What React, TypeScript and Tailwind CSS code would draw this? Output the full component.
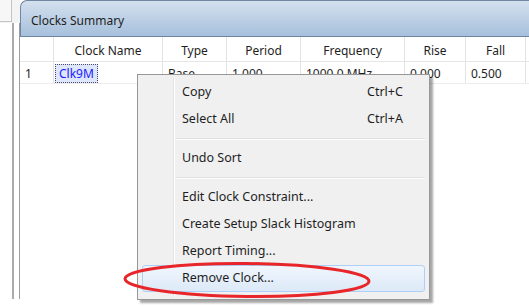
import React from "react";

const cols = [
  { label: "", w: "w-[34px]" },
  { label: "Clock Name", w: "w-[109px]" },
  { label: "Type", w: "w-[64px]" },
  { label: "Period", w: "w-[74px]" },
  { label: "Frequency", w: "w-[104px]" },
  { label: "Rise", w: "w-[61px]" },
  { label: "Fall", w: "w-[60px]" },
];

const row = ["1", "Clk9M", "Base", "1.000", "1000.0 MHz", "0.000", "0.500"];

type Item = { label?: string; key?: string; sep?: boolean; hot?: boolean };

const menu: Item[] = [
  { label: "Copy", key: "Ctrl+C" },
  { label: "Select All", key: "Ctrl+A" },
  { sep: true },
  { label: "Undo Sort" },
  { sep: true },
  { label: "Edit Clock Constraint..." },
  { label: "Create Setup Slack Histogram" },
  { label: "Report Timing..." },
  { label: "Remove Clock...", hot: true },
];

const App = () => {
  return (
    <div className="relative w-[529px] h-[307px] bg-white overflow-hidden text-[12px] text-[#1e1e1e] font-['Noto_Sans',sans-serif]">
      <div className="flex h-[299px]">
        {/* left dock strip */}
        <div className="w-[20px] flex flex-col">
          <div className="h-[23px] bg-[#f3f3f3] flex">
            <div className="w-[12px] h-[22px] bg-[#f7f7f7] border-r border-b border-[#c4c4c4]" />
          </div>
          <div className="flex-1 flex">
            <div className="w-[14px] border-r-2 border-[#a9abad]" />
            <div className="flex-1 border-r border-[#9a9c9f]" />
          </div>
        </div>

        {/* clocks summary panel */}
        <div className="flex-1 flex flex-col">
          <div className="h-[37px] rounded-tl-[7px] border-l border-t border-b border-[#6f86a3] bg-gradient-to-b from-[#d3e0ee] to-[#a7c0dc] flex items-center pl-[10px] pt-[4px]">
            Clocks Summary
          </div>
          <div className="flex h-[25px] border-b border-[#e6e6e6] bg-white">
            {cols.map((c, i) => (
              <div key={i} className={`${c.w} border-r border-[#e3e3e3] flex items-center justify-center pt-[3px]`}>
                {c.label}
              </div>
            ))}
          </div>
          <div className="flex h-[22px] border-b border-[#ececec]">
            {row.map((v, i) => (
              <div key={i} className={`${cols[i].w} border-r border-[#e3e3e3] flex items-center pt-[2px] text-[#1e1e1e] ${i === 1 ? "pl-[1px]" : "pl-[5px]"}`}>
                {i === 1 ? (
                  <span className="px-[3px] h-[19px] flex items-center bg-[#dde6fb] border border-dotted border-[#4a4a6a] text-[#2020ff]">{v}</span>
                ) : (
                  v
                )}
              </div>
            ))}
          </div>
          <div className="flex-1 bg-white" />
        </div>
      </div>

      {/* context menu */}
      <div className="absolute left-[137px] top-[74px] w-[293px] h-[226px] bg-[#f0f0f0] border border-[#979797] shadow-[3px_3px_2px_rgba(0,0,0,0.35)] pt-[4px] text-[12.5px]">
        <div className="absolute left-[35px] top-[2px] bottom-[2px] w-[2px] border-l border-[#e2e3e3] bg-white" />
        {menu.map((m, i) =>
          m.sep ? (
            <div key={i} className="h-[12px] flex items-center pl-[38px] pr-[4px]">
              <div className="h-[2px] w-full border-t border-[#e0e0e0] bg-white" />
            </div>
          ) : (
            <div key={i} className="h-[27px] px-[4px] relative">
              <div className={`h-full flex items-center pl-[39px] rounded-[3px] border ${m.hot ? "border-[#aecff7] bg-gradient-to-b from-[#f0f6fd] to-[#dde9f8]" : "border-transparent"}`}>
                <span className="w-[185px]">{m.label}</span>
                {m.key && <span>{m.key}</span>}
              </div>
            </div>
          )
        )}
      </div>

      {/* red annotation ellipse */}
      <svg className="absolute left-0 top-0" width="529" height="307">
        <ellipse cx="247" cy="280" rx="122" ry="16.5" fill="none" stroke="#e8262a" strokeWidth="3" transform="rotate(0.6 247 280)" />
      </svg>
    </div>
  );
};

export default App;
